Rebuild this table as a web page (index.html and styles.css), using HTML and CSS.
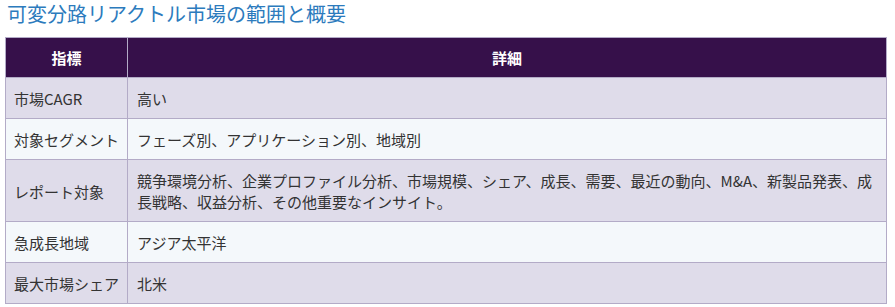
FILE: index.html
```html
<!DOCTYPE html>
<html lang="ja">
<head>
<meta charset="utf-8">
<link rel="stylesheet" href="styles.css">
</head>
<body>
<div class="wrap">
  <h2 class="title">可変分路リアクトル市場の範囲と概要</h2>
  <table class="scope">
    <thead>
      <tr><th class="c1">指標</th><th>詳細</th></tr>
    </thead>
    <tbody>
      <tr><td class="c1">市場CAGR</td><td>高い</td></tr>
      <tr><td class="c1">対象セグメント</td><td>フェーズ別、アプリケーション別、地域別</td></tr>
      <tr><td class="c1">レポート対象</td><td>競争環境分析、企業プロファイル分析、市場規模、シェア、成長、需要、最近の動向、M&amp;A、新製品発表、成長戦略、収益分析、その他重要なインサイト。</td></tr>
      <tr><td class="c1">急成長地域</td><td>アジア太平洋</td></tr>
      <tr><td class="c1">最大市場シェア</td><td>北米</td></tr>
    </tbody>
  </table>
</div>
</body>
</html>
```
FILE: styles.css
```css
html, body {
  margin: 0;
  padding: 0;
  background: #ffffff;
}
body {
  font-family: "Noto Sans CJK JP", "Noto Sans", sans-serif;
  color: #333333;
}
.wrap {
  padding: 0 8px 0 5px;
}
.title {
  margin: 0 0 10px 2px;
  font-size: 20px;
  line-height: 27px;
  font-weight: normal;
  color: #2c7bbd;
}
.scope {
  width: 882px;
  border-collapse: collapse;
  font-size: 15px;
  line-height: 21px;
  table-layout: fixed;
}
.scope th,
.scope td {
  border: 1px solid #b3abc7;
  padding: 9px 9px;
  text-align: left;
  vertical-align: middle;
}
.scope td {
  padding-top: 10px;
  padding-bottom: 9px;
}
.scope th {
  background: #36104a;
  color: #ffffff;
  font-weight: bold;
  text-align: center;
}
.scope .c1 {
  width: 105px;
  padding-left: 8px;
  padding-right: 8px;
  white-space: nowrap;
}
.scope th.c1 {
  text-align: center;
}
.scope tbody tr:nth-child(odd) td {
  background: #dfdcea;
}
.scope tbody tr:nth-child(even) td {
  background: #f4f8fb;
}
```
